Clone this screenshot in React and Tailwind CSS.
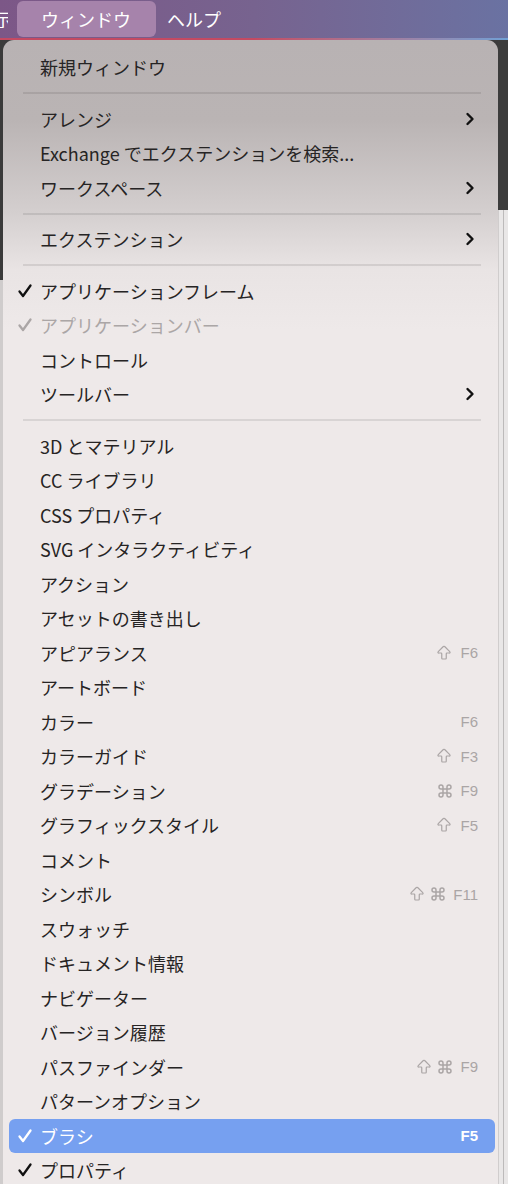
import React from 'react';
import { ArrowBigUp, Command } from 'lucide-react';

const items = [
  { label: '新規ウィンドウ' },
  { sep: true },
  { label: 'アレンジ', sub: true },
  { label: 'Exchange でエクステンションを検索...' },
  { label: 'ワークスペース', sub: true },
  { sep: true },
  { label: 'エクステンション', sub: true },
  { sep: true },
  { label: 'アプリケーションフレーム', checked: true },
  { label: 'アプリケーションバー', checked: true, disabled: true },
  { label: 'コントロール' },
  { label: 'ツールバー', sub: true },
  { sep: true },
  { label: '3D とマテリアル' },
  { label: 'CC ライブラリ' },
  { label: 'CSS プロパティ' },
  { label: 'SVG インタラクティビティ' },
  { label: 'アクション' },
  { label: 'アセットの書き出し' },
  { label: 'アピアランス', keys: ['shift'], fkey: 'F6' },
  { label: 'アートボード' },
  { label: 'カラー', keys: [], fkey: 'F6' },
  { label: 'カラーガイド', keys: ['shift'], fkey: 'F3' },
  { label: 'グラデーション', keys: ['cmd'], fkey: 'F9' },
  { label: 'グラフィックスタイル', keys: ['shift'], fkey: 'F5' },
  { label: 'コメント' },
  { label: 'シンボル', keys: ['shift', 'cmd'], fkey: 'F11' },
  { label: 'スウォッチ' },
  { label: 'ドキュメント情報' },
  { label: 'ナビゲーター' },
  { label: 'バージョン履歴' },
  { label: 'パスファインダー', keys: ['shift', 'cmd'], fkey: 'F9' },
  { label: 'パターンオプション' },
  { label: 'ブラシ', checked: true, active: true, keys: [], fkey: 'F5' },
  { label: 'プロパティ', checked: true },
];

const Check = ({ className }) => (
  <svg width="16" height="16" viewBox="0 0 16 16" className={className}>
    <path d="M2.5 8.5 L6 13 L13.5 2.5" fill="none" stroke="currentColor" strokeWidth="2.3" strokeLinecap="round" strokeLinejoin="round" />
  </svg>
);

const Chevron = () => (
  <svg width="10" height="14" viewBox="0 0 10 14">
    <path d="M2.5 2 L7.5 7 L2.5 12" fill="none" stroke="#111" strokeWidth="2.4" strokeLinecap="round" strokeLinejoin="round" />
  </svg>
);

const Row = ({ item }) => {
  const text = item.active ? 'text-white' : item.disabled ? 'text-[#aba6a6]' : 'text-[#262424]';
  return (
    <div className={`ml-[6px] mr-[3px] h-[34.5px] flex items-center rounded-[6px] ${item.active ? 'bg-[#76a0f0]' : ''}`}>
      <div className="w-[31px] pl-[8px] flex items-center">
        {item.checked && <Check className={item.active ? 'text-white' : item.disabled ? 'text-[#aba6a6]' : 'text-[#111]'} />}
      </div>
      <span className={`text-[18px] leading-[22px] ${text}`}>{item.label}</span>
      {item.sub && (
        <div className="ml-auto pr-[20px] flex items-center">
          <Chevron />
        </div>
      )}
      {item.fkey && (
        <div className={`ml-auto pr-[17px] flex items-center gap-[4px] text-[15px] leading-none ${item.active ? 'text-white font-semibold' : 'text-[#aaa5a5]'}`}>
          {item.keys.map((k, i) =>
            k === 'shift' ? (
              <ArrowBigUp key={i} size={18} strokeWidth={1.6} />
            ) : (
              <Command key={i} size={16} strokeWidth={2.2} />
            )
          )}
          <span className="font-['Liberation_Sans'] pl-[3px]">{item.fkey}</span>
        </div>
      )}
    </div>
  );
};

export default function App() {
  return (
    <div className="w-[508px] h-[1184px] overflow-hidden flex flex-col bg-[#3b3a3b] font-['Noto_Sans_CJK_JP',sans-serif]">
      {/* menu bar */}
      <div className="h-[38px] shrink-0 flex items-center bg-gradient-to-r from-[#7c5787] via-[#77638f] to-[#6a72a2] text-white text-[18px] leading-none">
        <span className="-ml-[6px] w-[14px] overflow-hidden">示</span>
        <div className="ml-[9px] h-[36px] w-[139px] rounded-[6px] bg-[#a683ab] flex items-center pl-[24px]">ウィンドウ</div>
        <span className="ml-[11px]">ヘルプ</span>
      </div>
      <div className="h-[2px] shrink-0 bg-gradient-to-r from-[#c44a62] via-[#c44a62] to-[#6f9fd4]" />

      <div className="flex flex-1">
        {/* left backdrop */}
        <div className="w-[3px] flex flex-col">
          <div className="h-[240px] bg-[#3a3a3a]" />
          <div className="flex-1 bg-[#cfcccc]" />
        </div>

        {/* menu panel */}
        <div className="w-[495px] rounded-t-[11px] pt-[10px] bg-[linear-gradient(to_bottom,#b8b2b3_0px,#bab4b4_80px,#d3cece_170px,#e9e4e4_230px,#eee9e9_290px)]">
          {items.map((item, i) =>
            item.sep ? (
              <div key={i} className="h-[17px] flex items-center pl-[20px] pr-[17px]">
                <div className="h-[2px] w-full bg-black/[0.09]" />
              </div>
            ) : (
              <Row key={i} item={item} />
            )
          )}
        </div>

        {/* right backdrop */}
        <div className="flex-1 flex flex-col">
          <div className="h-[170px] bg-[#3c3c3c]" />
          <div className="flex-1 bg-[#e9e7e7] border-l-[1px] border-[#d0cdcd]">
            <div className="ml-[4px] h-full w-[1px] bg-[#bcbaba]" />
          </div>
        </div>
      </div>
    </div>
  );
}
